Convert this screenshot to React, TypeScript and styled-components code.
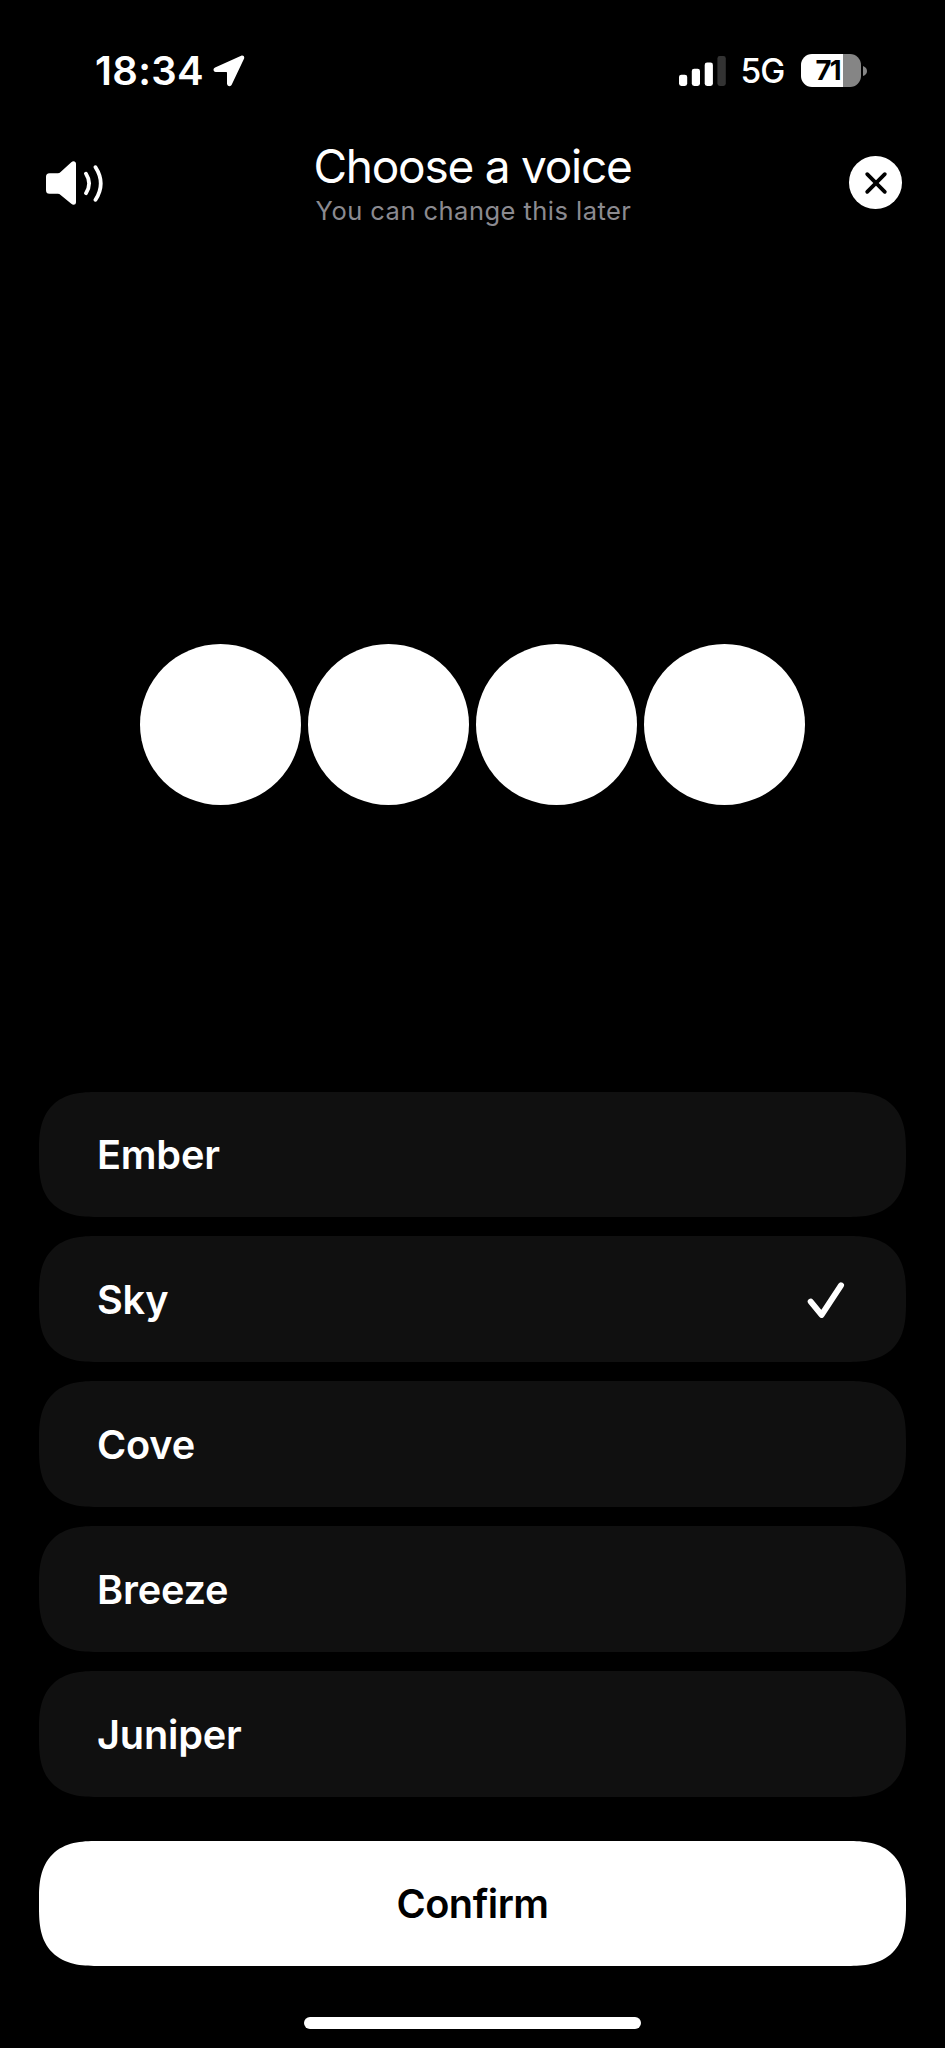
import React, { useState } from "react";
import styled, { createGlobalStyle } from "styled-components";

const GlobalStyle = createGlobalStyle`
  * { box-sizing: border-box; }
  body { margin: 0; background: #000; }
  button { font: inherit; color: inherit; border: 0; padding: 0; background: none; cursor: pointer; }
`;

const Screen = styled.main`
  display: flex;
  flex-direction: column;
  width: 945px;
  height: 2048px;
  overflow: hidden;
  background: #000;
  color: #fff;
  font-family: Inter, "Liberation Sans", sans-serif;
`;

const StatusBar = styled.div`
  display: flex;
  justify-content: space-between;
  align-items: center;
  height: 141px;
  padding: 0 78px 0 95px;
`;

const StatusGroup = styled.div`
  display: flex;
  align-items: center;
`;

const Time = styled.span`
  width: 118px;
  font-size: 40px;
  font-weight: 600;
  line-height: 48px;
  letter-spacing: 0.35px;
  white-space: nowrap;
`;

const Network = styled.span`
  width: 60px;
  margin-left: 15px;
  font-size: 33.5px;
  font-weight: 500;
  line-height: 40px;
  letter-spacing: -0.9px;
`;

const Battery = styled.div`
  display: flex;
  align-items: center;
  gap: 2px;
`;

const BatteryBody = styled.div<{ $level: number }>`
  display: flex;
  align-items: center;
  justify-content: center;
  width: 60.5px;
  height: 33.5px;
  padding-right: 6px;
  border-radius: 11px;
  background: linear-gradient(to right, #fff ${(p) => p.$level}%, #858585 ${(p) => p.$level}%);
  color: #000;
  font-size: 27.5px;
  font-weight: 700;
  line-height: 33px;
  letter-spacing: -1.6px;
`;

const Header = styled.header`
  display: grid;
  grid-template-columns: 1fr auto 1fr;
  grid-template-rows: 83px;
  align-items: center;
  height: 83px;
  padding: 0 43px 0 45px;
`;

const Heading = styled.div`
  display: flex;
  flex-direction: column;
  align-self: start;
  align-items: center;
  gap: 4px;
`;

const Title = styled.h1`
  margin: 0;
  padding-right: 2px;
  font-size: 46px;
  font-weight: 400;
  line-height: 50px;
  letter-spacing: -1.25px;
`;

const Subtitle = styled.p`
  margin: 0;
  color: #8b8a90;
  font-size: 25.5px;
  font-weight: 400;
  line-height: 32px;
  letter-spacing: 0.46px;
`;

const CloseButton = styled.button`
  display: grid;
  place-items: center;
  justify-self: end;
  width: 52.6px;
  height: 52.6px;
  border-radius: 50%;
  background: #fff;
`;

const Stage = styled.section`
  display: flex;
  justify-content: center;
  gap: 6.6px;
  height: 867.5px;
  padding-top: 420px;
`;

const Dot = styled.span`
  width: 161.4px;
  height: 161.4px;
  border-radius: 50%;
  background: #fff;
`;

const VoiceList = styled.div`
  display: flex;
  flex-direction: column;
  gap: 19.6px;
  padding: 0 39px;
`;

const Pill = styled.button`
  display: flex;
  align-items: center;
  flex-shrink: 0;
  height: 125.4px;
  border-radius: 50px;
  font-size: 39.7px;
  font-weight: 600;
  line-height: 48px;
  letter-spacing: -0.2px;
  @supports (corner-shape: superellipse(1.4)) {
    border-radius: 58px;
    corner-shape: superellipse(1.4);
  }
`;

const VoiceRow = styled(Pill)`
  justify-content: space-between;
  padding: 1px 60px 0 58px;
  background: #101010;
`;

const ConfirmButton = styled(Pill)`
  justify-content: center;
  margin: 43.8px 39px 0;
  padding-top: 1px;
  background: #fff;
  color: #000;
  letter-spacing: -0.5px;
`;

const HomeIndicator = styled.div`
  width: 337px;
  height: 12.4px;
  margin: 50.6px auto 0;
  border-radius: 7px;
  background: #fff;
`;

const LocationIcon = () => (
  <svg width="32" height="32" viewBox="0 0 32 32" fill="#fff">
    <path d="M28.2 .8 2.1 12.5C-.3 13.6 .1 17 2.7 17H13.4Q14 17 14 17.7V28.6C14 31.4 17.6 32.2 18.8 29.6L31 3.8C31.9 1.8 30.2-.1 28.2 .8Z" />
  </svg>
);

const SignalIcon = () => (
  <svg width="47" height="30" viewBox="0 0 47 30" fill="#fff">
    <rect x="0" y="18.7" width="8.2" height="11.3" rx="2.4" />
    <rect x="12.8" y="12.7" width="8.2" height="17.3" rx="2.4" />
    <rect x="25.7" y="6.6" width="8.2" height="23.4" rx="2.4" />
    <rect x="38.4" y="0" width="8.4" height="30" rx="2.4" fill="#333" />
  </svg>
);

const BatteryCap = () => (
  <svg width="4" height="10" viewBox="0 0 4 10">
    <path d="M0 0Q4 1.5 4 5T0 10Z" fill="#858585" />
  </svg>
);

const SpeakerIcon = () => (
  <svg width="60" height="46" viewBox="0 0 60 46" fill="none">
    <path
      d="M4.5 13.3H12.8Q14.4 13.3 15.6 12.1L26.3 2.2C28.2.5 31 1.2 31 3.8V42.2C31 44.8 28.2 45.5 26.3 43.8L15.6 34.9Q14.4 33.7 12.8 33.7H4.5Q1 33.7 1 30.2V16.8Q1 13.3 4.5 13.3Z"
      fill="#fff"
    />
    <path d="M41 13.7Q47.2 23.3 41 33.2M50.5 7.2Q61 23.4 50.5 39.8" stroke="#fff" strokeWidth="3.8" strokeLinecap="round" />
  </svg>
);

const CloseIcon = () => (
  <svg width="24" height="24" viewBox="0 0 24 24" fill="none" stroke="#000" strokeWidth="3.8" strokeLinecap="round">
    <path d="M3.2 3.2 20.8 20.8M20.8 3.2 3.2 20.8" />
  </svg>
);

const CheckIcon = () => (
  <svg width="40" height="40" viewBox="0 0 40 40" fill="none" stroke="#fff" strokeWidth="6" strokeLinecap="round" strokeLinejoin="round">
    <path d="M4.7 21.6 15.6 34.9 35 5.3" />
  </svg>
);

const voices = ["Ember", "Sky", "Cove", "Breeze", "Juniper"];

export default function App() {
  const [selected, setSelected] = useState("Sky");
  return (
    <>
      <GlobalStyle />
      <Screen>
        <StatusBar>
          <StatusGroup>
            <Time>18:34</Time>
            <LocationIcon />
          </StatusGroup>
          <StatusGroup>
            <SignalIcon />
            <Network>5G</Network>
            <Battery>
              <BatteryBody $level={70}>71</BatteryBody>
              <BatteryCap />
            </Battery>
          </StatusGroup>
        </StatusBar>
        <Header>
          <SpeakerIcon />
          <Heading>
            <Title>Choose a voice</Title>
            <Subtitle>You can change this later</Subtitle>
          </Heading>
          <CloseButton aria-label="Close">
            <CloseIcon />
          </CloseButton>
        </Header>
        <Stage>
          {[0, 1, 2, 3].map((i) => (
            <Dot key={i} />
          ))}
        </Stage>
        <VoiceList>
          {voices.map((voice) => (
            <VoiceRow key={voice} onClick={() => setSelected(voice)}>
              {voice}
              {voice === selected && <CheckIcon />}
            </VoiceRow>
          ))}
        </VoiceList>
        <ConfirmButton>Confirm</ConfirmButton>
        <HomeIndicator />
      </Screen>
    </>
  );
}
